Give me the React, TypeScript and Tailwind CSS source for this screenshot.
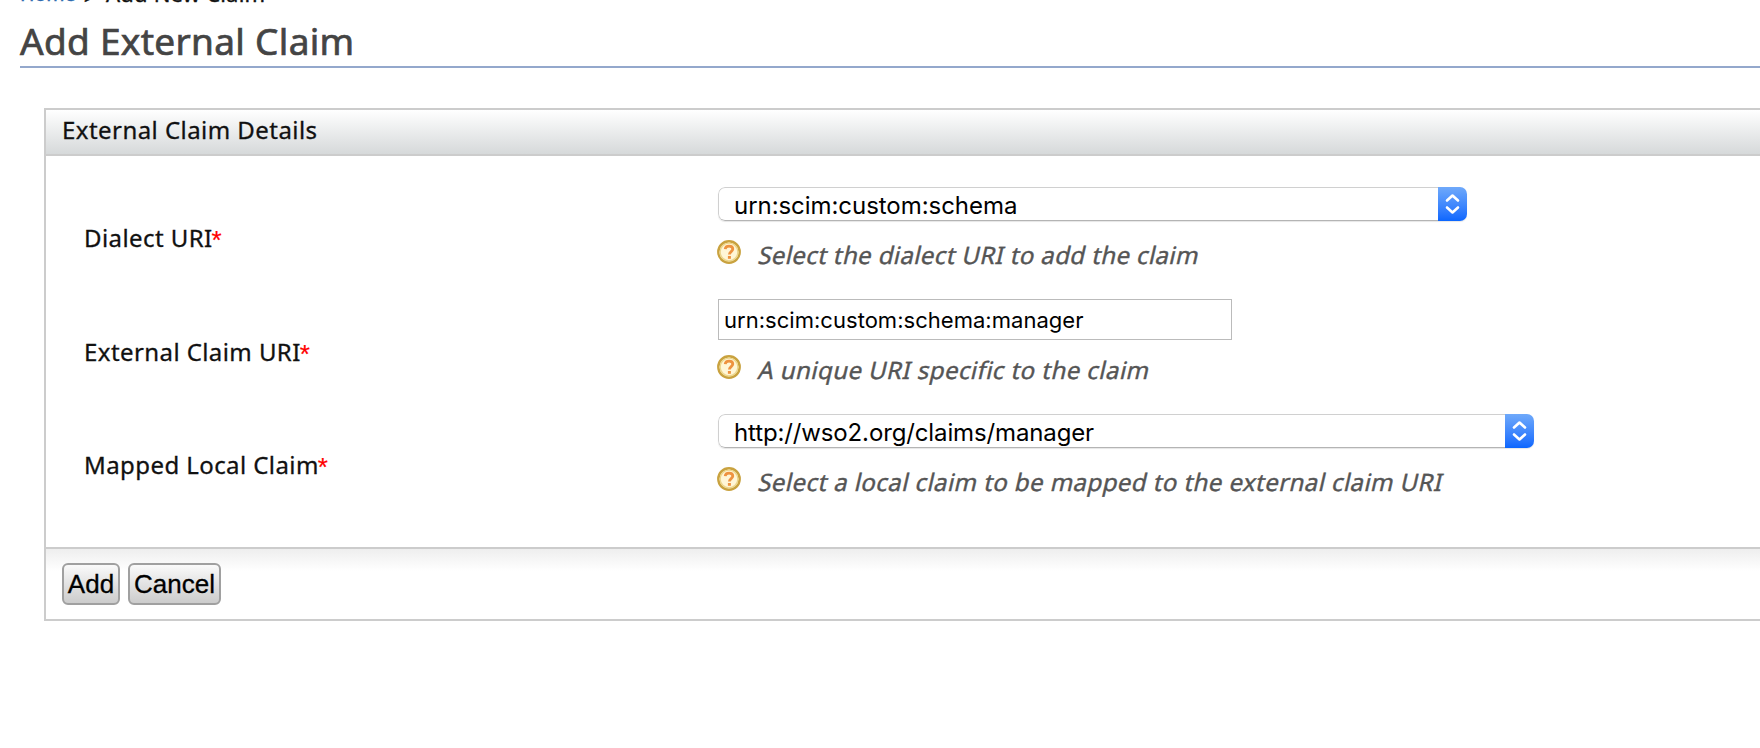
import type { ReactNode } from "react";

function HelpIcon() {
  return (
    <svg width="24" height="24" viewBox="0 0 24 24" className="mt-px shrink-0">
      <circle cx="12" cy="12" r="10.700" fill="#fff6d6" stroke="#c9a23f" strokeWidth="2.400" />
      <circle cx="12" cy="12" r="8.900" fill="none" stroke="#ecd68c" strokeWidth="1.400" />
      <path
        d="M8.200 9.200C8.400 7.200 9.900 6.200 12 6.200c2.200 0 3.800 1.100 3.800 2.900 0 2.500-3.400 2.500-3.400 5.300"
        fill="none"
        stroke="#ee9340"
        strokeWidth="2.800"
      />
      <rect x="10.900" y="16" width="3" height="2.800" fill="#ee9340" />
    </svg>
  );
}

function Hint({ className, textClass, children }: { className: string; textClass: string; children: ReactNode }) {
  return (
    <div className={`-ml-px flex items-start ${className}`}>
      <HelpIcon />
      <span
        className={`ml-[16px] inline-block origin-[0_25px] -skew-x-[13deg] text-[24px] leading-[32px] whitespace-nowrap text-[#555] [-webkit-text-stroke:0.4px_#555] ${textClass}`}
      >
        {children}
      </span>
    </div>
  );
}

function Select({ className, textClass, value }: { className: string; textClass: string; value: string }) {
  return (
    <div
      className={`flex h-[34px] overflow-hidden rounded-[7px] shadow-[0_1px_1px_rgba(0,0,0,0.1)] ${className}`}
    >
      <span
        className={`flex-1 rounded-l-[7px] border border-r-0 border-[#d0d0d0] border-b-[#b4b4b4] bg-white pl-[15px] font-['Inter',sans-serif] text-[24px] leading-[35px] whitespace-nowrap text-black ${textClass}`}
      >
        {value}
      </span>
      <span className="flex w-[29px] items-center justify-center bg-linear-to-b from-[#6fa9fa] to-[#0a66fe]">
        <svg width="16" height="22" viewBox="0 0 16 22" fill="none" stroke="#fff" strokeWidth="2.600" strokeLinecap="round" strokeLinejoin="round">
          <path d="M2 7.500 7.500 2.500l5.500 5M2 14.500l5.500 5 5.500-5" />
        </svg>
      </span>
    </div>
  );
}

function Row({ label, labelClass, className, children }: { label: string; labelClass: string; className: string; children: ReactNode }) {
  return (
    <div className={`flex ${className}`}>
      <div className={`w-[634px] shrink-0 text-[24px] leading-[24px] tracking-[0.420px] whitespace-nowrap text-[#111] [-webkit-text-stroke:0.3px_#111] ${labelClass}`}>
        {label}
        <span className="-ml-px inline-block h-[24px] align-top font-['Liberation_Sans',sans-serif] text-[26px] leading-[28px] tracking-normal text-[#f00] [-webkit-text-stroke:0.2px_#f00]">*</span>
      </div>
      <div>{children}</div>
    </div>
  );
}

function Button({ className, children }: { className: string; children: ReactNode }) {
  return (
    <button
      className={`h-[42px] rounded-[6px] border-2 border-[#a0a0a0] bg-linear-to-b from-[#fafafa] to-[#cccccc] font-['Liberation_Sans',sans-serif] text-[26px] leading-[38px] text-black [-webkit-text-stroke:0.3px_#000] ${className}`}
    >
      {children}
    </button>
  );
}

export default function App() {
  return (
    <div className="h-[748px] w-full overflow-hidden bg-white font-['Noto_Sans',sans-serif]">
      <nav className="-mt-[12px] flex h-[10px] pl-[20px] text-[22px] leading-[10px] whitespace-nowrap text-[#111] [-webkit-text-stroke:0.4px]">
        <a className="w-[63px] pt-px text-[19.500px] text-[#2f6cb0]">Home</a>
        <span className="w-[23px] pt-[4px] pl-px text-[18px]">&gt;</span>
        <span className="tracking-[0.200px]">Add New Claim</span>
      </nav>
      <h1 className="mt-[23px] ml-[20px] border-b-2 border-[#94a8cc] pb-[5px] text-[37px] leading-[40px] tracking-[0.300px] text-[#444] [-webkit-text-stroke:0.7px_#444]">
        Add External Claim
      </h1>
      <section className="mt-[40px] ml-[44px] border-2 border-r-0 border-[#ccc]">
        <h2 className="h-[46px] border-b-2 border-[#ccc] bg-linear-to-b from-white to-[#d6d9da] pl-[16px] text-[24px] leading-[39px] tracking-[0.450px] text-[#111] [-webkit-text-stroke:0.3px_#111]">
          External Claim Details
        </h2>
        <div className="h-[391px] pt-[31px] pl-[38px]">
          <Row label="Dialect URI" className="h-[112px]" labelClass="mt-[39px]">
            <Select value="urn:scim:custom:schema" className="w-[749px]" textClass="tracking-[-0.050px]" />
            <Hint className="mt-[18px]" textClass="tracking-[0.390px]">Select the dialect URI to add the claim</Hint>
          </Row>
          <Row label="External Claim URI" className="h-[115px]" labelClass="mt-[41px]">
            <input
              readOnly
              value="urn:scim:custom:schema:manager"
              className="block h-[41px] w-[514px] border border-[#bbb] bg-white px-[5px] font-['Inter',sans-serif] text-[22px] tracking-[0.030px] text-black"
            />
            <Hint className="mt-[14px]" textClass="tracking-[0.450px]">A unique URI specific to the claim</Hint>
          </Row>
          <Row label="Mapped Local Claim" className="" labelClass="mt-[39px]">
            <Select value="http://wso2.org/claims/manager" className="w-[816px]" textClass="tracking-[-0.130px]" />
            <Hint className="mt-[18px]" textClass="tracking-[0.435px]">Select a local claim to be mapped to the external claim URI</Hint>
          </Row>
        </div>
        <footer className="flex h-[72px] gap-[8px] border-t-2 border-[#ccc] bg-linear-to-b from-[#eeeeee] to-white to-[22px] pt-[14px] pl-[16px]">
          <Button className="w-[58px]">Add</Button>
          <Button className="w-[93px]">Cancel</Button>
        </footer>
      </section>
    </div>
  );
}
